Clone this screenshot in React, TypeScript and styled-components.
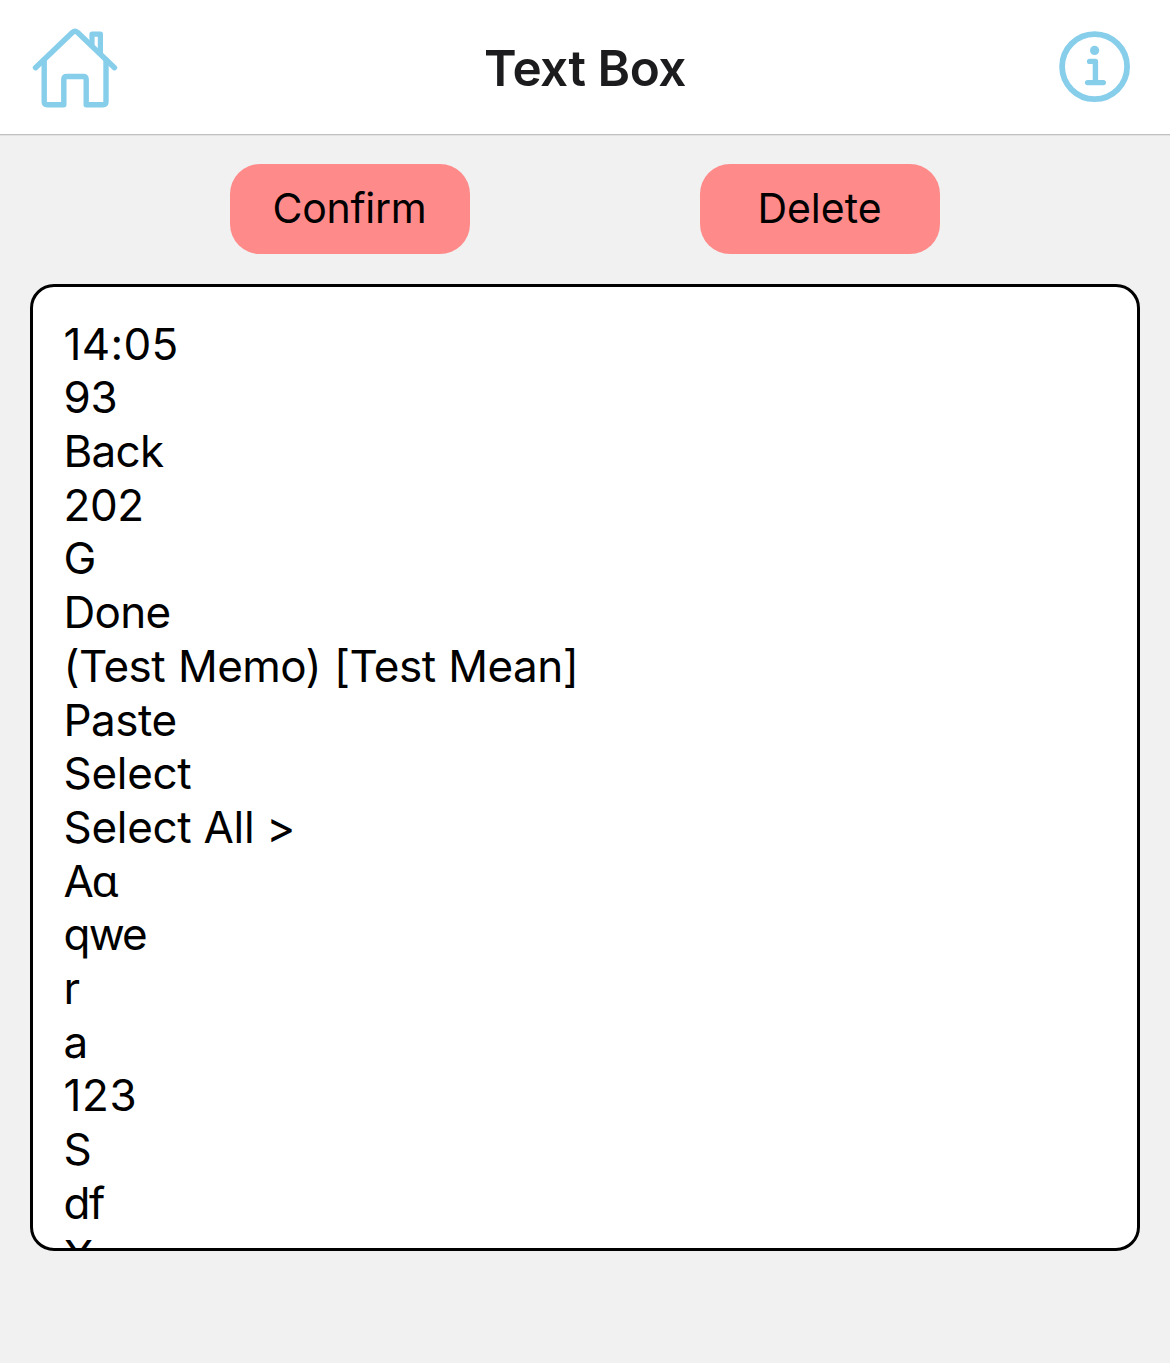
import React from "react";
import styled, { createGlobalStyle } from "styled-components";

const GlobalStyle = createGlobalStyle`
  * { box-sizing: border-box; }
  body {
    margin: 0;
    background: #f1f1f1;
    font-family: Inter, Roboto, "Liberation Sans", sans-serif;
    color: #000;
  }
`;

const Screen = styled.div`
  display: flex;
  flex-direction: column;
  height: 1363px;
  overflow: hidden;
`;

const Header = styled.header`
  display: flex;
  flex: none;
  align-items: flex-start;
  justify-content: space-between;
  height: 135px;
  padding: 25px 36px 0 30px;
  background: #fff;
  border-bottom: 1px solid #c0c0c0;
  box-shadow: 0 1px 0 #e2e2e2;
`;

const IconButton = styled.button<{ $width: number }>`
  display: block;
  flex: none;
  width: ${(p) => p.$width}px;
  height: 86px;
  padding: 0;
  border: 0;
  background: none;
  color: #87ceeb;

  svg { display: block; }
`;

const Title = styled.h1`
  margin: 13px 6px 0 0;
  font-size: 49.5px;
  line-height: 60px;
  font-weight: 600;
  letter-spacing: -0.5px;
  color: #1c1c1e;
`;

const Actions = styled.div`
  display: flex;
  flex: none;
  gap: 230px;
  padding: 29px 230px 30px;
`;

const ActionButton = styled.button<{ $spacing: number }>`
  width: 240px;
  height: 90px;
  padding: 0 1px 2px 0;
  border: 0;
  border-radius: 30px;
  background: #ff8a8a;
  color: #000;
  font-family: inherit;
  font-size: 41px;
  line-height: 50px;
  letter-spacing: ${(p) => p.$spacing}px;
`;

const TextArea = styled.div`
  flex: none;
  height: 967px;
  margin: 0 30px;
  padding: 30.7px 31px 0 30.5px;
  overflow: hidden;
  border: 3px solid #000;
  border-radius: 24px;
  background: #fff;
`;

const Line = styled.div<{ $spacing: number; $plain?: boolean }>`
  height: 53.7px;
  font-size: 44px;
  line-height: 53.7px;
  letter-spacing: ${(p) => p.$spacing}px;
  word-spacing: ${(p) => (p.$plain ? 1 : 0)}px;
  font-feature-settings: ${(p) => (p.$plain ? '"calt" 0' : "normal")};
  white-space: pre;
`;

const ScriptAlpha = styled.span`
  margin-left: -1.5px;
  font-family: Roboto, "Noto Sans", sans-serif;
  line-height: 1;
`;

const lines: { text: string; spacing: number; plain?: boolean; alpha?: boolean }[] = [
  { text: "14:05", spacing: 0.3 },
  { text: "93", spacing: -0.4 },
  { text: "Back", spacing: -0.7 },
  { text: "202", spacing: -0.4 },
  { text: "G", spacing: 0 },
  { text: "Done", spacing: -0.7 },
  { text: "(Test Memo) [Test Mean]", spacing: -0.54, plain: true },
  { text: "Paste", spacing: -0.5 },
  { text: "Select", spacing: -0.3 },
  { text: "Select All >", spacing: -0.3 },
  { text: "A", spacing: -0.8, alpha: true },
  { text: "qwe", spacing: -1.8 },
  { text: "r", spacing: 0 },
  { text: "a", spacing: 0 },
  { text: "123", spacing: 0.6 },
  { text: "S", spacing: 0 },
  { text: "df", spacing: -1.4 },
  { text: "X", spacing: 0 },
];

const HomeIcon = () => (
  <svg width="90" height="86" viewBox="30 25 90 86" fill="none" stroke="currentColor" strokeWidth="5.4" strokeLinecap="round" strokeLinejoin="round">
    <path d="M35.5 67.7 L72.6 32.3 Q75 30.3 77.4 32.3 L114.5 67.7" />
    <path d="M44.2 60 V101.8 Q44.2 104.8 47.2 104.8 H63.8 V79.5 Q63.8 76.5 66.8 76.5 H83.2 Q86.2 76.5 86.2 79.5 V104.8 H103 Q106 104.8 106 101.8 V60" />
    <path d="M92 44.5 V34.2 H100.4 V53" strokeWidth="5.2" />
  </svg>
);

const InfoIcon = () => (
  <svg width="78" height="86" viewBox="1056 25 78 86" fill="none" stroke="currentColor" strokeWidth="5.4" strokeLinecap="round" strokeLinejoin="round">
    <circle cx="1094.6" cy="66.6" r="32.5" strokeWidth="5.8" />
    <circle cx="1094.6" cy="50.4" r="4.6" fill="currentColor" stroke="none" />
    <path d="M1089.6 61.4 H1095.4 V82.6 M1087.6 82.6 H1103.3" />
  </svg>
);

export default function App() {
  return (
    <>
      <GlobalStyle />
      <Screen>
        <Header>
          <IconButton $width={90} aria-label="Home"><HomeIcon /></IconButton>
          <Title>Text Box</Title>
          <IconButton $width={78} aria-label="Info"><InfoIcon /></IconButton>
        </Header>
        <Actions>
          <ActionButton $spacing={-0.3}>Confirm</ActionButton>
          <ActionButton $spacing={0}>Delete</ActionButton>
        </Actions>
        <TextArea>
          {lines.map((line) => (
            <Line key={line.text} $spacing={line.spacing} $plain={line.plain}>
              {line.text}
              {line.alpha && <ScriptAlpha>ɑ</ScriptAlpha>}
            </Line>
          ))}
        </TextArea>
      </Screen>
    </>
  );
}
